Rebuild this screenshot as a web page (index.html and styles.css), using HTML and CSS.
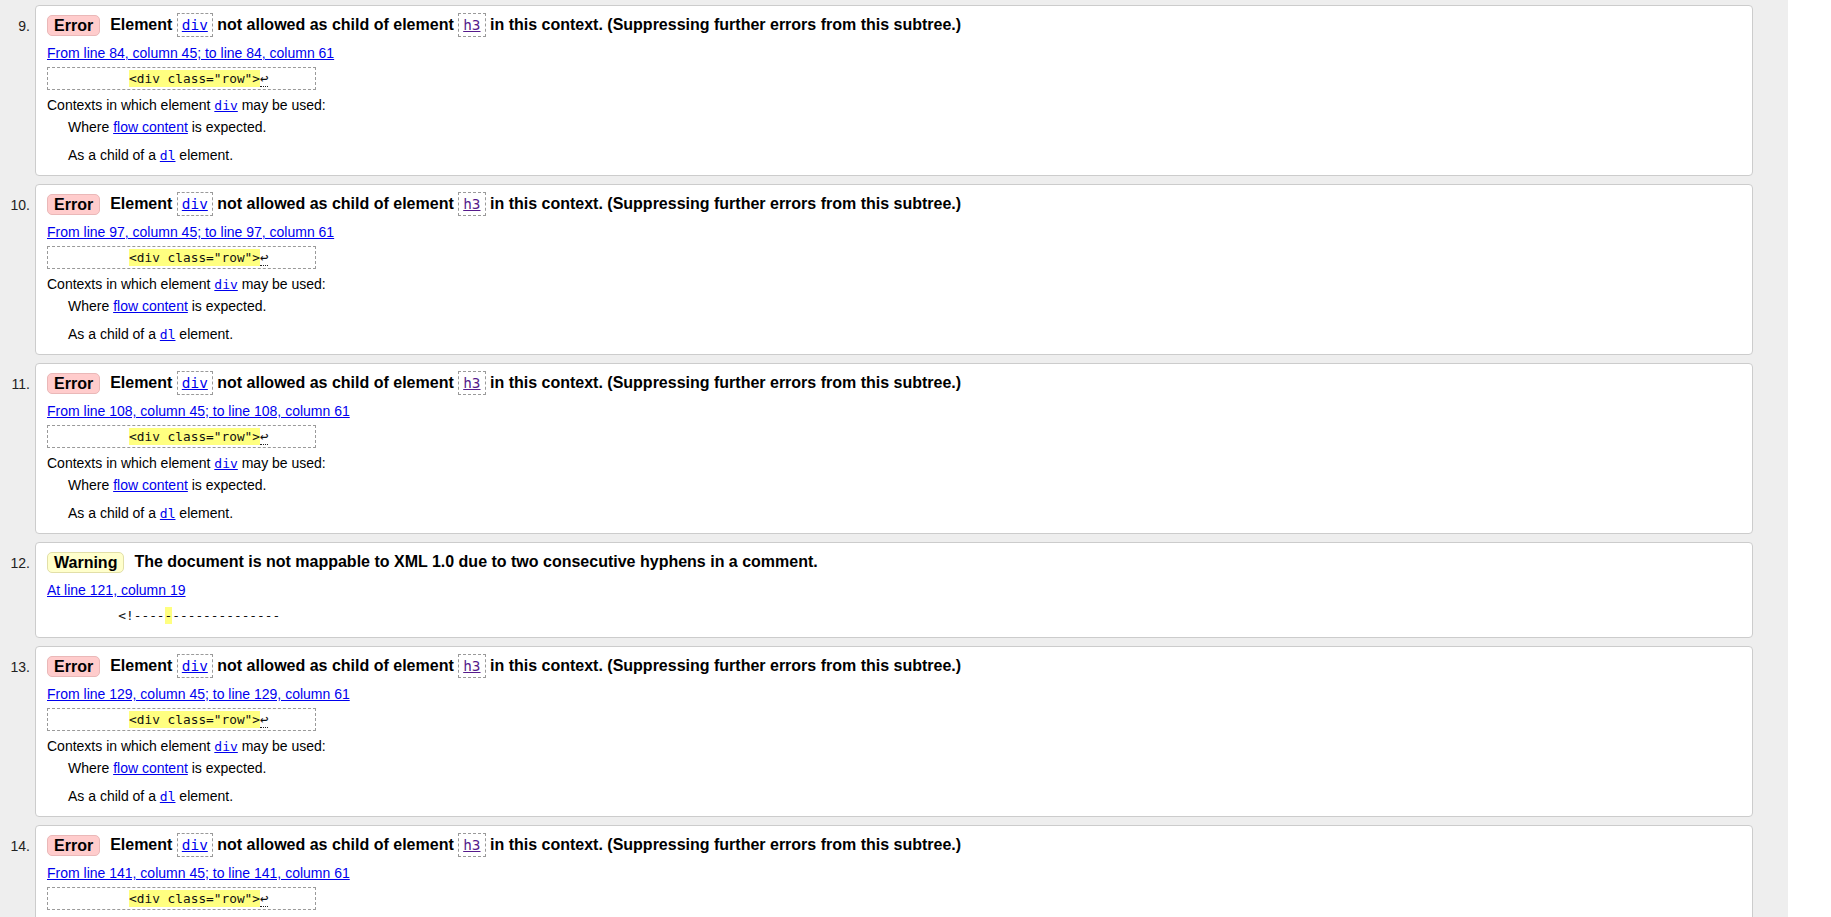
FILE: index.html
```html
<!DOCTYPE html>
<html lang="en">
<head>
<meta charset="utf-8">
<title>Validation results</title>
<link rel="stylesheet" href="styles.css">
</head>
<body>
<div class="page">
  <div class="results">

    <div class="item">
      <span class="num">9.</span>
      <div class="card">
        <div class="head"><span class="badge error">Error</span><span class="msg">Element <a class="ref" href="#"><code>div</code></a> not allowed as child of element <a class="ref visited" href="#"><code>h3</code></a> in this context. (Suppressing further errors from this subtree.)</span></div>
        <p class="loc"><a href="#">From line 84, column 45; to line 84, column 61</a></p>
        <code class="extract">          <b>&lt;div class="row"&gt;</b><span class="lf">↩</span>     </code>
        <dl class="ctx">
          <dt>Contexts in which element <a href="#"><code>div</code></a> may be used:</dt>
          <dd>Where <a href="#">flow content</a> is expected.</dd>
          <dd class="second">As a child of a <a href="#"><code>dl</code></a> element.</dd>
        </dl>
      </div>
    </div>

    <div class="item">
      <span class="num">10.</span>
      <div class="card">
        <div class="head"><span class="badge error">Error</span><span class="msg">Element <a class="ref" href="#"><code>div</code></a> not allowed as child of element <a class="ref visited" href="#"><code>h3</code></a> in this context. (Suppressing further errors from this subtree.)</span></div>
        <p class="loc"><a href="#">From line 97, column 45; to line 97, column 61</a></p>
        <code class="extract">          <b>&lt;div class="row"&gt;</b><span class="lf">↩</span>     </code>
        <dl class="ctx">
          <dt>Contexts in which element <a href="#"><code>div</code></a> may be used:</dt>
          <dd>Where <a href="#">flow content</a> is expected.</dd>
          <dd class="second">As a child of a <a href="#"><code>dl</code></a> element.</dd>
        </dl>
      </div>
    </div>

    <div class="item">
      <span class="num">11.</span>
      <div class="card">
        <div class="head"><span class="badge error">Error</span><span class="msg">Element <a class="ref" href="#"><code>div</code></a> not allowed as child of element <a class="ref visited" href="#"><code>h3</code></a> in this context. (Suppressing further errors from this subtree.)</span></div>
        <p class="loc"><a href="#">From line 108, column 45; to line 108, column 61</a></p>
        <code class="extract">          <b>&lt;div class="row"&gt;</b><span class="lf">↩</span>     </code>
        <dl class="ctx">
          <dt>Contexts in which element <a href="#"><code>div</code></a> may be used:</dt>
          <dd>Where <a href="#">flow content</a> is expected.</dd>
          <dd class="second">As a child of a <a href="#"><code>dl</code></a> element.</dd>
        </dl>
      </div>
    </div>

    <div class="item">
      <span class="num">12.</span>
      <div class="card">
        <div class="head"><span class="badge warning">Warning</span><span class="msg">The document is not mappable to XML 1.0 due to two consecutive hyphens in a comment.</span></div>
        <p class="loc"><a href="#">At line 121, column 19</a></p>
        <code class="extract plain">         &lt;!----<b>-</b>--------------</code>
      </div>
    </div>

    <div class="item">
      <span class="num">13.</span>
      <div class="card">
        <div class="head"><span class="badge error">Error</span><span class="msg">Element <a class="ref" href="#"><code>div</code></a> not allowed as child of element <a class="ref visited" href="#"><code>h3</code></a> in this context. (Suppressing further errors from this subtree.)</span></div>
        <p class="loc"><a href="#">From line 129, column 45; to line 129, column 61</a></p>
        <code class="extract">          <b>&lt;div class="row"&gt;</b><span class="lf">↩</span>     </code>
        <dl class="ctx">
          <dt>Contexts in which element <a href="#"><code>div</code></a> may be used:</dt>
          <dd>Where <a href="#">flow content</a> is expected.</dd>
          <dd class="second">As a child of a <a href="#"><code>dl</code></a> element.</dd>
        </dl>
      </div>
    </div>

    <div class="item">
      <span class="num">14.</span>
      <div class="card">
        <div class="head"><span class="badge error">Error</span><span class="msg">Element <a class="ref" href="#"><code>div</code></a> not allowed as child of element <a class="ref visited" href="#"><code>h3</code></a> in this context. (Suppressing further errors from this subtree.)</span></div>
        <p class="loc"><a href="#">From line 141, column 45; to line 141, column 61</a></p>
        <code class="extract">          <b>&lt;div class="row"&gt;</b><span class="lf">↩</span>     </code>
        <dl class="ctx">
          <dt>Contexts in which element <a href="#"><code>div</code></a> may be used:</dt>
          <dd>Where <a href="#">flow content</a> is expected.</dd>
          <dd class="second">As a child of a <a href="#"><code>dl</code></a> element.</dd>
        </dl>
      </div>
    </div>

  </div>
</div>
</body>
</html>
```

FILE: styles.css
```css
html, body {
  margin: 0;
  padding: 0;
  overflow: hidden;
  background: #ffffff;
}

body {
  font-family: "Liberation Sans", Arial, sans-serif;
  font-size: 14px;
  line-height: 20px;
  color: #000;
}

.page {
  width: 1788px;
  min-height: 917px;
  background: #eeeeee;
}

.results {
  padding: 5px 35px 0 0;
}

.item {
  display: flex;
  align-items: flex-start;
  margin-bottom: 8.5px;
}

.num {
  flex: 0 0 30px;
  width: 30px;
  margin-right: 5px;
  padding-top: 11px;
  text-align: right;
  color: #222;
  line-height: 20px;
}

.card {
  flex: 1;
  background: #fff;
  border: 1px solid #cccccc;
  border-radius: 4px;
  padding: 6px 11px 9.5px 11px;
}

a {
  color: #0000ee;
}

a.visited {
  color: #551a8b;
}

code {
  font-family: "DejaVu Sans Mono", "Liberation Mono", monospace;
}

.head {
  display: flex;
  align-items: center;
  gap: 10px;
  height: 26px;
}

.badge {
  display: block;
  font-weight: bold;
  font-size: 16px;
  line-height: 19px;
  padding: 0 6px;
  border-radius: 5px;
  border: 1px solid;
}

.badge.error {
  background: #ffcccc;
  border-color: #eab8b8;
}

.badge.warning {
  background: #ffffcc;
  border-color: #e2dfa8;
}

.msg {
  font-weight: bold;
  font-size: 16px;
  line-height: 26px;
  white-space: nowrap;
}

.ref {
  text-decoration: none;
}

.ref code {
  display: inline-block;
  font-weight: normal;
  font-size: 14.4px;
  line-height: 18px;
  padding: 2px 4px;
  border: 1px dashed #9a9a9a;
  text-decoration: underline;
}

.loc {
  margin: 5px 0 0 0;
  height: 20px;
  line-height: 20px;
}

.extract {
  display: block;
  width: fit-content;
  margin-top: 4px;
  font-size: 12.8px;
  line-height: 19px;
  height: 19px;
  padding: 1px 8px 1px 4px;
  border: 1px dashed #9a9a9a;
  white-space: pre;
  color: #111;
}

.extract.plain {
  border-color: transparent;
  padding-left: 1px;
}

.extract b {
  font-weight: normal;
  background: #ffff80;
  padding: 1px 0;
}

.extract .lf {
  font-size: 14px;
  line-height: 1;
  border-bottom: 1px dotted #222;
}

.ctx {
  margin: 5px 0 0 0;
}

.ctx dt {
  height: 20px;
  line-height: 20px;
}

.ctx dd {
  margin: 2px 0 0 21px;
  height: 20px;
  line-height: 20px;
}

.ctx dd.second {
  margin-top: 8px;
}

.ctx code {
  font-size: 13px;
  line-height: 1;
}
```
